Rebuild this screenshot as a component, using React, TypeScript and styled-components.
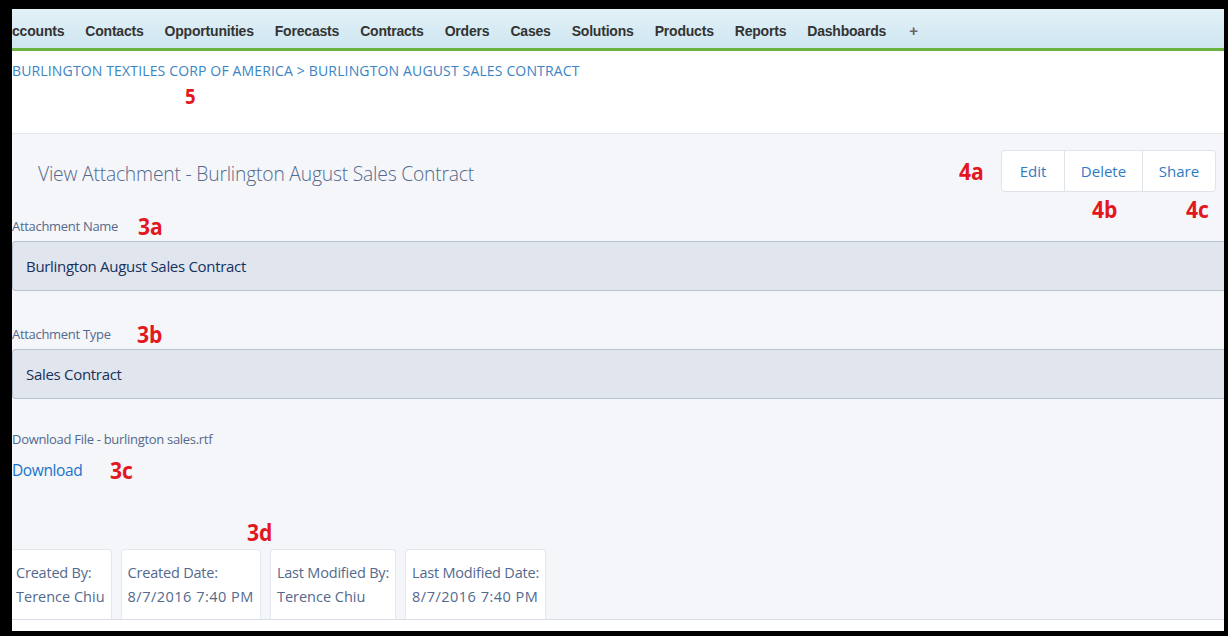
import styled, { createGlobalStyle } from "styled-components";

const GlobalStyle = createGlobalStyle`
  html, body {
    margin: 0;
    padding: 0;
    background: #000;
  }
  body {
    font-family: "Open Sans", sans-serif;
  }
`;

const Frame = styled.div`
  width: 1228px;
  height: 636px;
  box-sizing: border-box;
  padding: 9px 4px 5px 12px;
  background: #000;
  overflow: hidden;
`;

const Page = styled.div`
  height: 100%;
  display: flex;
  flex-direction: column;
  background: #fff;
  overflow: hidden;
`;

const TabBar = styled.nav`
  height: 42px;
  flex-shrink: 0;
  display: flex;
  align-items: center;
  gap: 21px;
  padding-top: 4px;
  box-sizing: border-box;
  background: linear-gradient(#e2f1f8, #cfe6f0);
  border-bottom: 3px solid #6bb43f;
  white-space: nowrap;
  overflow: hidden;
`;

const Tab = styled.span`
  font-family: "Liberation Sans", Arial, sans-serif;
  font-weight: 700;
  font-size: 14px;
  color: #333;
  letter-spacing: -0.2px;
`;

const PlusTab = styled(Tab)`
  color: #666;
  font-size: 15px;
  margin-left: 2px;
`;

const CrumbArea = styled.div`
  height: 82px;
  flex-shrink: 0;
  padding-top: 10px;
  box-sizing: border-box;
`;

const Crumbs = styled.div`
  font-family: "Open Sans", sans-serif;
  font-size: 14px;
  line-height: 19px;
  color: #3a84c4;
  letter-spacing: 0.15px;
`;

// red callout numbers drawn over the form
const Marker = styled.span<{ $size?: number }>`
  display: inline-block;
  font-family: "Open Sans", sans-serif;
  font-weight: 700;
  font-size: ${(p) => p.$size ?? 24}px;
  line-height: 1;
  color: #e3171f;
  transform: scaleX(0.88);
  transform-origin: left center;
`;

const CrumbMarker = styled.div`
  padding-left: 173px;
  margin-top: 6px;
`;

const Panel = styled.section`
  flex: 1;
  display: flex;
  flex-direction: column;
  background: #f4f6f9;
  border-top: 1px solid #e3e7ee;
  border-bottom: 1px solid #d8dde6;
`;

const Header = styled.div`
  height: 79px;
  box-sizing: border-box;
  display: flex;
  align-items: flex-start;
  justify-content: space-between;
  padding: 16px 8px 0 26px;
`;

const Title = styled.h1`
  margin: 10px 0 0;
  font-family: "Open Sans", sans-serif;
  font-weight: 300;
  font-size: 19.3px;
  color: #54698d;
  letter-spacing: -0.2px;
`;

const Actions = styled.div`
  display: flex;
  flex-direction: column;
  align-items: flex-end;
`;

const ActionRow = styled.div`
  display: flex;
  align-items: center;
  gap: 14px;
`;

const ButtonGroup = styled.div`
  display: flex;
  height: 42px;
  background: #fff;
  border: 1px solid #dfe3ea;
  border-radius: 4px;
  box-sizing: border-box;
`;

const GroupButton = styled.button<{ $width: number }>`
  width: ${(p) => p.$width}px;
  height: 100%;
  border: none;
  border-left: 1px solid #dfe3ea;
  background: transparent;
  font-family: "Open Sans", sans-serif;
  font-size: 15px;
  color: #2f7cc5;
  padding: 0;
  cursor: pointer;
  &:first-child {
    border-left: none;
  }
`;

const SubMarkers = styled.div`
  display: flex;
  gap: 65px;
  margin-top: 5px;
  padding-right: 4px;
`;

const Field = styled.div<{ $gap?: number }>`
  display: flex;
  flex-direction: column;
  margin-top: ${(p) => p.$gap ?? 0}px;
`;

const LabelRow = styled.div<{ $gap: number }>`
  display: flex;
  align-items: center;
  gap: ${(p) => p.$gap}px;
  height: 26px;
`;

const Label = styled.span`
  font-family: "Open Sans", sans-serif;
  font-size: 13px;
  color: #54698d;
  letter-spacing: -0.3px;
`;

const ValueBox = styled.div`
  height: 50px;
  display: flex;
  align-items: center;
  padding-left: 13px;
  margin-top: 2px;
  background: #e0e5ee;
  border: 1px solid #b8c1ce;
  border-right: none;
  border-radius: 4px 0 0 4px;
  box-sizing: border-box;
  font-family: "Open Sans", sans-serif;
  font-size: 15px;
  color: #16325c;
  letter-spacing: -0.3px;
`;

const Download = styled.div`
  display: flex;
  flex-direction: column;
  margin-top: 30px;
`;

const FileLabel = styled(Label)`
  line-height: 20px;
`;

const LinkRow = styled.div`
  display: flex;
  align-items: center;
  gap: 28px;
  height: 30px;
  margin-top: 6px;
`;

const DownloadLink = styled.a`
  font-family: "Open Sans", sans-serif;
  font-size: 15.5px;
  color: #1a74c9;
  letter-spacing: -0.4px;
  text-decoration: none;
`;

const MetaMarker = styled.div`
  padding-left: 235px;
  margin-top: 35px;
  height: 24px;
`;

const MetaRow = styled.div`
  display: flex;
  gap: 9px;
  margin-top: 5px;
  flex: 1;
`;

const MetaCard = styled.div`
  display: flex;
  flex-direction: column;
  justify-content: center;
  gap: 3px;
  padding: 0 6px;
  background: #fff;
  border: 1px solid #e3e7ee;
  border-bottom: none;
  border-radius: 4px 4px 0 0;
  font-family: "Open Sans", sans-serif;
  font-size: 14.5px;
  line-height: 21px;
  color: #54698d;
  white-space: nowrap;
`;

const FirstCard = styled(MetaCard)`
  border-left: none;
  border-radius: 0 4px 0 0;
  padding-left: 4px;
`;

const MetaKey = styled.span`
  letter-spacing: -0.2px;
`;

const MetaValue = styled.span<{ $wide?: boolean }>`
  letter-spacing: ${(p) => (p.$wide ? "0.5px" : "0")};
`;

const BottomStrip = styled.div`
  height: 11px;
  flex-shrink: 0;
  background: #fff;
`;

const tabs = [
  "ccounts",
  "Contacts",
  "Opportunities",
  "Forecasts",
  "Contracts",
  "Orders",
  "Cases",
  "Solutions",
  "Products",
  "Reports",
  "Dashboards",
];

const meta = [
  { key: "Created By:", value: "Terence Chiu", date: false },
  { key: "Created Date:", value: "8/7/2016 7:40 PM", date: true },
  { key: "Last Modified By:", value: "Terence Chiu", date: false },
  { key: "Last Modified Date:", value: "8/7/2016 7:40 PM", date: true },
];

export default function App() {
  return (
    <>
      <GlobalStyle />
      <Frame>
        <Page>
          <TabBar>
            {tabs.map((t) => (
              <Tab key={t}>{t}</Tab>
            ))}
            <PlusTab>+</PlusTab>
          </TabBar>

          <CrumbArea>
            <Crumbs>
              BURLINGTON TEXTILES CORP OF AMERICA &gt; BURLINGTON AUGUST SALES
              CONTRACT
            </Crumbs>
            <CrumbMarker>
              <Marker $size={21}>5</Marker>
            </CrumbMarker>
          </CrumbArea>

          <Panel>
            <Header>
              <Title>View Attachment - Burlington August Sales Contract</Title>
              <Actions>
                <ActionRow>
                  <Marker>4a</Marker>
                  <ButtonGroup>
                    <GroupButton $width={62}>Edit</GroupButton>
                    <GroupButton $width={78}>Delete</GroupButton>
                    <GroupButton $width={73}>Share</GroupButton>
                  </ButtonGroup>
                </ActionRow>
                <SubMarkers>
                  <Marker>4b</Marker>
                  <Marker>4c</Marker>
                </SubMarkers>
              </Actions>
            </Header>

            <Field>
              <LabelRow $gap={20}>
                <Label>Attachment Name</Label>
                <Marker>3a</Marker>
              </LabelRow>
              <ValueBox>Burlington August Sales Contract</ValueBox>
            </Field>

            <Field $gap={30}>
              <LabelRow $gap={26}>
                <Label>Attachment Type</Label>
                <Marker>3b</Marker>
              </LabelRow>
              <ValueBox>Sales Contract</ValueBox>
            </Field>

            <Download>
              <FileLabel>Download File - burlington sales.rtf</FileLabel>
              <LinkRow>
                <DownloadLink href="#">Download</DownloadLink>
                <Marker>3c</Marker>
              </LinkRow>
            </Download>

            <MetaMarker>
              <Marker>3d</Marker>
            </MetaMarker>

            <MetaRow>
              {meta.map((m, i) => {
                const Card = i === 0 ? FirstCard : MetaCard;
                return (
                  <Card key={m.key}>
                    <MetaKey>{m.key}</MetaKey>
                    <MetaValue $wide={m.date}>{m.value}</MetaValue>
                  </Card>
                );
              })}
            </MetaRow>
          </Panel>
          <BottomStrip />
        </Page>
      </Frame>
    </>
  );
}
